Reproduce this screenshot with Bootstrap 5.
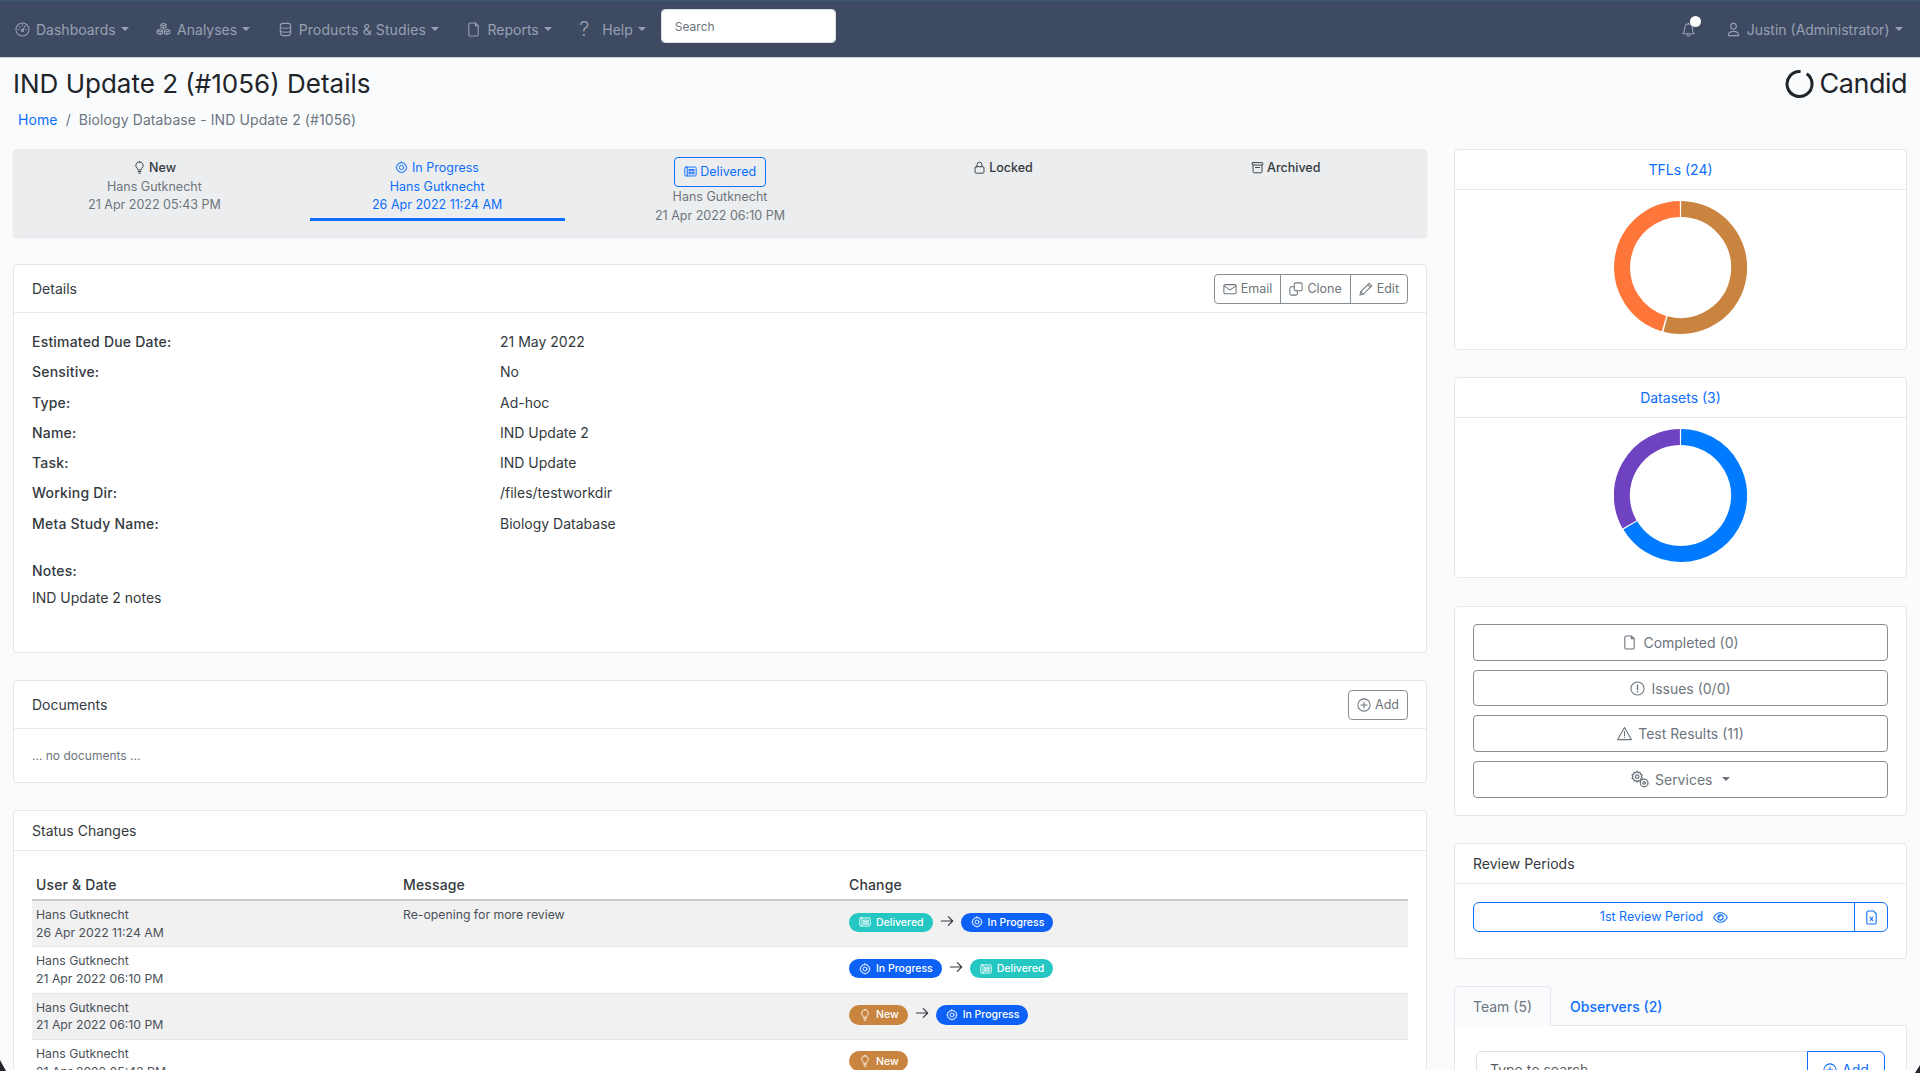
<!DOCTYPE html>
<html lang="en">
<head>
<meta charset="utf-8">
<title>IND Update 2 (#1056) Details</title>
<link href="https://cdn.jsdelivr.net/npm/bootstrap@5.3.0/dist/css/bootstrap.min.css" rel="stylesheet">
<style>
html,body{height:1080px;overflow:hidden;background:#fff}
body{font-family:Inter,"Liberation Sans",sans-serif;font-size:14px;color:#343a40;line-height:1.5}
.app-frame{height:1070px;overflow:hidden;background:#fafbfd;position:relative}
.ico{width:1em;height:1em;fill:none;stroke:currentColor;stroke-width:1.15;stroke-linecap:round;stroke-linejoin:round;flex:none;vertical-align:-.125em}
.topbar{background:#3e4a61;height:58px;padding:0 4px 0 1px;border-top:1px solid #3d5675;border-bottom:1px solid #c8ccd2;flex-wrap:nowrap}
.topbar .nav-link{color:#98a1b1;font-size:14px;padding:0 13.5px 0 14px;display:flex;align-items:center;gap:6px;white-space:nowrap}
.topbar .nav-link .ico{font-size:15px}
.topbar .dropdown-toggle::after{margin-left:-1px}
.topbar .nav-wide{letter-spacing:.11px}
.help-mark{font-size:20px;font-weight:300;line-height:1;width:11px;margin-right:6px}
.nav-search{width:175px;height:34px;font-size:12px;padding:0 13px;margin:-6px 0 0 1.500px;border-radius:4px}
.nav-search::placeholder{color:#6c757d;opacity:1}
.bell-wrap{position:relative;color:#98a1b1;font-size:15px;margin-right:16px;display:flex}
.bell-dot{position:absolute;right:-5px;top:-6px;width:11px;height:11px;border-radius:50%;background:#fff}
.page-body{padding:0 13px;display:flex;gap:27px;align-items:flex-start}
.main-col{flex:1;min-width:0}
.side-col{width:453px;flex:none}
.title-row{height:91px;padding-top:7px;margin:0 13px}
.page-title{font-size:26px;font-weight:400;color:#212529;margin:0;line-height:38px}
.crumbs{font-size:14px;letter-spacing:.1px;margin:6px 0 0 5px;--bs-breadcrumb-divider-color:#6c757d;--bs-breadcrumb-item-active-color:#6c757d}
.brand-mark{display:flex;align-items:center;gap:6px;font-size:27px;color:#212529;letter-spacing:-.5px;line-height:38px}
.stepper{background:#ecedef;border-radius:4px;height:88px;padding:8px 0 0;margin-bottom:27px;box-shadow:0 1px 1px #e4e5e8;font-size:12.5px;line-height:18.5px;color:#6c757d;text-align:center}
.step-cell{padding:2px 14px 0}
.step-cell b{font-weight:500;color:#343a40}
.step-on{color:#0d6efd;margin:0 14px;padding-bottom:3px;border-bottom:3px solid #0d6efd}
.step-on b{color:#0d6efd;font-weight:400}
.step-cell .ico{font-size:13px;vertical-align:-2px}
.step-btn{display:inline-block;border:1px solid #0d6efd;border-radius:4px;color:#0d6efd;height:30px;line-height:28px;padding:0 9px;margin:-2px 0 1px;font-size:12.5px}
.pane{border:1px solid #e6e7ea;border-radius:4px;--bs-card-cap-bg:#fff;margin-bottom:27px}
.pane-gap{margin-bottom:28px}
.pane .card-header{background:#fff;border-bottom:1px solid #e8e9ec;padding:0 18px;display:flex;align-items:center;justify-content:space-between;color:#343a40;font-size:14px}
.head-tall{height:48px}
.head-short{height:40px}
.tool-btn{font-size:12.5px;height:30px;padding:1px 8px 0;display:inline-flex;align-items:center;gap:4px;--bs-btn-border-color:#868e96;border-radius:4px}
.tool-btn .ico{font-size:14px}
.field-list{padding:14px 18px 0;height:339px}
.field-line{display:grid;grid-template-columns:468px 1fr;line-height:30.3px}
.field-line span:first-child,.note-head{font-weight:500;letter-spacing:.2px}
.note-head{margin-top:21px;line-height:21px}
.note-text{margin-top:6px;line-height:21px}
.empty-note{height:53px;padding:18px 18px 0;font-size:12px;color:#6c757d;line-height:18px}
.log-wrap{padding:17px 18px 0}
.log-table{font-size:12.25px;line-height:17.8px;margin:0;color:#495057;table-layout:fixed;--bs-table-striped-bg:#f1f1f2;--bs-table-striped-color:#495057;--bs-table-border-color:#e4e5e8}
.log-table th{font-size:14px;font-weight:500;letter-spacing:.15px;color:#343a40;padding:6px 4px 4px;border-bottom:2px solid #c9cbce;line-height:21px}
.log-table td{padding:5px 4px 4.700px}
.state-pill{font-size:10.5px;font-weight:500;height:19.5px;line-height:19px;padding:0 9px 0 10px;display:inline-flex;align-items:center;gap:5px;border-radius:10px;color:#fff;vertical-align:top}
.state-pill .ico{font-size:12px}
.pill-teal{background:#25c7c3}.pill-blue{background:#0d62f5}.pill-orange{background:#c9843f}
.change-cell{display:flex;align-items:center;gap:7px;padding-top:6.500px}
.change-cell>.ico{font-size:14px;color:#343a40;margin-top:-3px;stroke-width:1.3}
.side-col .pane .card-header{justify-content:center;height:39.500px}
.side-col .pane .card-header.to-left{justify-content:flex-start;height:40px}
.count-link{color:#0d6efd;text-decoration:none;font-size:14px}
.donut-box{height:159.500px;display:flex;justify-content:center;padding-top:11.500px}
.donut-svg{width:133px;height:133px}
.stack-box{padding:17px 18px;display:flex;flex-direction:column;gap:9px}
.wide-btn{height:36.7px;font-size:14px;--bs-btn-border-color:#868e96;display:flex;align-items:center;justify-content:center;gap:6px;border-radius:4px;padding:0}
.wide-btn .ico{font-size:15px}
.wide-btn .ico-big{font-size:18px}
.review-box{height:74px;padding:18px 18px 0}
.review-btn{height:30px;font-size:12.5px;padding:1px 0 0;display:flex;align-items:center;justify-content:center;gap:10px}
.review-btn .ico{font-size:15px}
.btn-group .review-end{flex:0 0 34px}
.tab-row{border-bottom:1px solid #e6e7ea;height:40px;--bs-nav-tabs-border-radius:4px;margin-top:1px}
.tab-row .nav-link{height:40px;padding:0 18px;line-height:39px;font-size:14px;font-weight:500;color:#0d6efd;border:1px solid transparent}
.tab-row .nav-link.active{background:#fafbfd;border-color:#e6e7ea #e6e7ea #fafbfd;color:#6c757d;padding:0 18px;font-weight:400}
.team-box{border:1px solid #e6e7ea;border-top:0;border-radius:0 0 4px 4px;background:#fff;padding:25px 21px;height:120px;position:relative}
.team-box input{height:38px;font-size:14px;border-color:#dee2e6;padding-left:13px}
.team-add{width:78px;flex:none;font-size:14px;display:flex;align-items:center;justify-content:center;gap:5px;padding:0}
.corner-l,.corner-r{position:fixed;fill:#24262a}
.corner-l{left:0;top:1060px;width:6px;height:11px}
.corner-r{left:1915px;top:1065px;width:5px;height:8px}
</style>
</head>
<body>
<svg width="0" height="0" class="position-absolute">
<defs>
<symbol id="i-gauge" viewBox="0 0 16 16"><circle cx="8" cy="8" r="7"/><path d="M8 8.800 11 4.200M3.500 8h1M11.500 8h1M5 5l.7.7M8 3v1"/><circle cx="8" cy="9" r="1.100"/></symbol>
<symbol id="i-boxes" viewBox="0 0 16 16"><path d="M8 1.200 10.800 2.600V5.600L8 7 5.200 5.600V2.600ZM5.200 2.600 8 4l2.800-1.400M8 4v3"/><path d="M4.400 7.600 7.200 9V12L4.400 13.400 1.200 12V9ZM1.200 9l3.200 1.400L7.200 9M4.400 10.400v3"/><path d="M11.600 7.600 14.800 9V12L11.600 13.400 8.800 12V9ZM8.800 9l2.800 1.400L14.800 9M11.600 10.400v3"/></symbol>
<symbol id="i-db" viewBox="0 0 16 16"><rect x="2.500" y="1.500" width="11" height="13" rx="3"/><path d="M2.500 6c1.500 1 9.500 1 11 0M2.500 10.200c1.500 1 9.500 1 11 0"/></symbol>
<symbol id="i-file" viewBox="0 0 16 16"><path d="M3 2.500A1.500 1.500 0 0 1 4.500 1H10l3 3v9.500a1.500 1.500 0 0 1-1.500 1.500h-7A1.500 1.500 0 0 1 3 13.500ZM10 1v3h3"/></symbol>
<symbol id="i-bell" viewBox="0 0 16 16"><path d="M8 2a4 4 0 0 0-4 4c0 4-1.500 5.500-2 6.500h12C13.500 11.500 12 10 12 6a4 4 0 0 0-4-4ZM8 1v1M6.500 13.500a1.500 1.500 0 0 0 3 0"/></symbol>
<symbol id="i-user" viewBox="0 0 16 16"><circle cx="8" cy="4.500" r="3"/><path d="M2.500 14.500c0-3.500 2.500-4.500 5.500-4.500s5.500 1 5.500 4.500Z"/></symbol>
<symbol id="i-bulb" viewBox="0 0 16 16"><path d="M8 1a4.500 4.500 0 0 0-2.800 8c.5.500.8 1.200.8 2h4c0-.8.300-1.500.8-2A4.500 4.500 0 0 0 8 1ZM6.300 13h3.400M7 15h2"/></symbol>
<symbol id="i-gear" viewBox="0 0 16 16"><path d="M8 1l1.200 1.700 2-.4.6 2 2 .6-.4 2L15 8l-1.600 1.100.4 2-2 .6-.6 2-2-.4L8 15l-1.200-1.700-2 .4-.6-2-2-.6.4-2L1 8l1.600-1.100-.4-2 2-.6.6-2 2 .4Z"/><circle cx="8" cy="8" r="2.600"/></symbol>
<symbol id="i-news" viewBox="0 0 16 16"><rect x="1" y="2.500" width="14" height="11" rx="1.500"/><path d="M4 2.500v11M6.500 5.500h6v1.700h-6ZM6.500 9h2v2h-2ZM10.500 9h2v2h-2Z"/></symbol>
<symbol id="i-lock" viewBox="0 0 16 16"><rect x="2.500" y="7" width="11" height="8" rx="1.500"/><path d="M5 7V4.500a3 3 0 0 1 6 0V7"/></symbol>
<symbol id="i-archive" viewBox="0 0 16 16"><rect x="1.500" y="2" width="13" height="3" rx=".8"/><path d="M2.500 5v8a1.500 1.500 0 0 0 1.500 1.500h8a1.500 1.500 0 0 0 1.500-1.500V5M5.500 8h5"/></symbol>
<symbol id="i-mail" viewBox="0 0 16 16"><rect x="1" y="3" width="14" height="10.500" rx="1.500"/><path d="M1 4.500 8 9l7-4.500"/></symbol>
<symbol id="i-copy" viewBox="0 0 16 16"><rect x="6" y="1" width="9" height="9" rx="1.500"/><path d="M6 5.500H2.500A1.500 1.500 0 0 0 1 7v6.500A1.500 1.500 0 0 0 2.500 15H8a1.500 1.500 0 0 0 1.500-1.500V10"/></symbol>
<symbol id="i-pen" viewBox="0 0 16 16"><path d="M11.500 1.500 14.500 4.500 5 14 1 15 2 11ZM10 3l3 3M2 11l3 3"/></symbol>
<symbol id="i-plus" viewBox="0 0 16 16"><circle cx="8" cy="8" r="7"/><path d="M8 4.500v7M4.500 8h7"/></symbol>
<symbol id="i-alert" viewBox="0 0 16 16"><circle cx="8" cy="8" r="7"/><path d="M8 4.200v5M8 11.400v.4" stroke-width="1.500"/></symbol>
<symbol id="i-warn" viewBox="0 0 16 16"><path d="M8 1.500 15.300 14.500H.7ZM8 6v4.200M8 12v.3"/></symbol>
<symbol id="i-gears" viewBox="0 0 16 16"><path d="M5.500 1 6.500 2.300l1.600-.2.300 1.600 1.500.7-.7 1.500.7 1.500-1.500.7-.3 1.600-1.600-.2-1 1.300-1-1.300-1.600.2-.3-1.600L1 7.400l.7-1.500L1 4.400l1.500-.7.300-1.600 1.600.2Z"/><circle cx="5.500" cy="5.900" r="1.500"/><circle cx="11.700" cy="11.500" r="3.400"/><circle cx="11.700" cy="11.500" r="1.100"/></symbol>
<symbol id="i-eye" viewBox="0 0 16 16"><path d="M.8 8S3.500 3 8 3s7.200 5 7.200 5-2.700 5-7.200 5S.8 8 .8 8Z"/><circle cx="8" cy="8" r="2.800"/><path d="M8 6.400A1.600 1.600 0 0 0 6.400 8"/></symbol>
<symbol id="i-filex" viewBox="0 0 16 16"><path d="M3 2.500A1.500 1.500 0 0 1 4.500 1H10l3 3v9.500a1.500 1.500 0 0 1-1.500 1.500h-7A1.500 1.500 0 0 1 3 13.500ZM6.500 7.500l3 4M9.500 7.500l-3 4"/></symbol>
<symbol id="i-arrow" viewBox="0 0 16 16"><path d="M1.500 8h13M9.500 3l5 5-5 5"/></symbol>
</defs>
</svg>

<div class="app-frame">
<nav class="navbar topbar d-flex align-items-center justify-content-between">
  <div class="d-flex align-items-center">
    <a class="nav-link dropdown-toggle" href="#"><svg class="ico"><use href="#i-gauge"/></svg>Dashboards</a>
    <a class="nav-link dropdown-toggle" href="#"><svg class="ico"><use href="#i-boxes"/></svg>Analyses</a>
    <a class="nav-link dropdown-toggle nav-wide" href="#"><svg class="ico"><use href="#i-db"/></svg>Products &amp; Studies</a>
    <a class="nav-link dropdown-toggle" href="#"><svg class="ico"><use href="#i-file"/></svg>Reports</a>
    <a class="nav-link dropdown-toggle" href="#"><span class="help-mark">?</span>Help</a>
    <input class="form-control nav-search" type="text" placeholder="Search">
  </div>
  <div class="d-flex align-items-center">
    <span class="bell-wrap"><svg class="ico"><use href="#i-bell"/></svg><span class="bell-dot"></span></span>
    <a class="nav-link dropdown-toggle" href="#"><svg class="ico"><use href="#i-user"/></svg>Justin (Administrator)</a>
  </div>
</nav>

<div class="title-row d-flex justify-content-between align-items-start">
  <div>
    <h1 class="page-title">IND Update 2 (#1056) Details</h1>
    <ol class="breadcrumb crumbs">
      <li class="breadcrumb-item"><a href="#" class="text-decoration-none">Home</a></li>
      <li class="breadcrumb-item active">Biology Database - IND Update 2 (#1056)</li>
    </ol>
  </div>
  <div class="brand-mark">
    <svg width="29" height="30" viewBox="0 0 29 30"><path d="M21.700 4.760A12.500 12.500 0 1 1 15.600 2.550" fill="none" stroke="#212529" stroke-width="3"/></svg>Candid
  </div>
</div>

<div class="page-body">
  <div class="main-col">
    <div class="stepper row g-0">
      <div class="col"><div class="step-cell"><b><svg class="ico"><use href="#i-bulb"/></svg> New</b><br>Hans Gutknecht<br>21 Apr 2022 05:43 PM</div></div>
      <div class="col"><div class="step-cell step-on"><b><svg class="ico"><use href="#i-gear"/></svg> In Progress</b><br>Hans Gutknecht<br>26 Apr 2022 11:24 AM</div></div>
      <div class="col"><div class="step-cell"><span class="step-btn"><svg class="ico"><use href="#i-news"/></svg> Delivered</span><br>Hans Gutknecht<br>21 Apr 2022 06:10 PM</div></div>
      <div class="col"><div class="step-cell"><b><svg class="ico"><use href="#i-lock"/></svg> Locked</b></div></div>
      <div class="col"><div class="step-cell"><b><svg class="ico"><use href="#i-archive"/></svg> Archived</b></div></div>
    </div>

    <div class="card pane">
      <div class="card-header head-tall">
        <span>Details</span>
        <div class="btn-group">
          <button class="btn btn-outline-secondary tool-btn"><svg class="ico"><use href="#i-mail"/></svg>Email</button>
          <button class="btn btn-outline-secondary tool-btn"><svg class="ico"><use href="#i-copy"/></svg>Clone</button>
          <button class="btn btn-outline-secondary tool-btn"><svg class="ico"><use href="#i-pen"/></svg>Edit</button>
        </div>
      </div>
      <div class="field-list">
        <div class="field-line"><span>Estimated Due Date:</span><span>21 May 2022</span></div>
        <div class="field-line"><span>Sensitive:</span><span>No</span></div>
        <div class="field-line"><span>Type:</span><span>Ad-hoc</span></div>
        <div class="field-line"><span>Name:</span><span>IND Update 2</span></div>
        <div class="field-line"><span>Task:</span><span>IND Update</span></div>
        <div class="field-line"><span>Working Dir:</span><span>/files/testworkdir</span></div>
        <div class="field-line"><span>Meta Study Name:</span><span>Biology Database</span></div>
        <div class="note-head">Notes:</div>
        <div class="note-text">IND Update 2 notes</div>
      </div>
    </div>

    <div class="card pane">
      <div class="card-header head-tall">
        <span>Documents</span>
        <button class="btn btn-outline-secondary tool-btn"><svg class="ico"><use href="#i-plus"/></svg>Add</button>
      </div>
      <div class="empty-note">... no documents ...</div>
    </div>

    <div class="card pane">
      <div class="card-header head-short"><span>Status Changes</span></div>
      <div class="log-wrap">
        <table class="table table-striped log-table">
          <colgroup><col style="width:367px"><col style="width:446px"><col></colgroup>
          <thead><tr><th>User &amp; Date</th><th>Message</th><th>Change</th></tr></thead>
          <tbody>
            <tr><td>Hans Gutknecht<br>26 Apr 2022 11:24 AM</td><td>Re-opening for more review</td><td><div class="change-cell"><span class="state-pill pill-teal"><svg class="ico"><use href="#i-news"/></svg>Delivered</span><svg class="ico"><use href="#i-arrow"/></svg><span class="state-pill pill-blue"><svg class="ico"><use href="#i-gear"/></svg>In Progress</span></div></td></tr>
            <tr><td>Hans Gutknecht<br>21 Apr 2022 06:10 PM</td><td></td><td><div class="change-cell"><span class="state-pill pill-blue"><svg class="ico"><use href="#i-gear"/></svg>In Progress</span><svg class="ico"><use href="#i-arrow"/></svg><span class="state-pill pill-teal"><svg class="ico"><use href="#i-news"/></svg>Delivered</span></div></td></tr>
            <tr><td>Hans Gutknecht<br>21 Apr 2022 06:10 PM</td><td></td><td><div class="change-cell"><span class="state-pill pill-orange"><svg class="ico"><use href="#i-bulb"/></svg>New</span><svg class="ico"><use href="#i-arrow"/></svg><span class="state-pill pill-blue"><svg class="ico"><use href="#i-gear"/></svg>In Progress</span></div></td></tr>
            <tr><td>Hans Gutknecht<br>21 Apr 2022 05:43 PM</td><td></td><td><div class="change-cell"><span class="state-pill pill-orange"><svg class="ico"><use href="#i-bulb"/></svg>New</span></div></td></tr>
          </tbody>
        </table>
      </div>
    </div>
  </div>

  <div class="side-col">
    <div class="card pane">
      <div class="card-header"><a href="#" class="count-link">TFLs (24)</a></div>
      <div class="donut-box">
        <svg class="donut-svg" viewBox="0 0 133 133" fill="none" stroke-width="16">
          <path d="M67.100 8A58.500 58.500 0 1 1 51.500 123" stroke="#c9843f"/>
          <path d="M50 122.600A58.500 58.500 0 0 1 65.900 8" stroke="#ff763b"/>
        </svg>
      </div>
    </div>
    <div class="card pane pane-gap">
      <div class="card-header"><a href="#" class="count-link">Datasets (3)</a></div>
      <div class="donut-box">
        <svg class="donut-svg" viewBox="0 0 133 133" fill="none" stroke-width="16">
          <path d="M67.100 8A58.500 58.500 0 1 1 16.300 96.300" stroke="#007bff"/>
          <path d="M15.500 95.500A58.500 58.500 0 0 1 65.900 8" stroke="#6f42c1"/>
        </svg>
      </div>
    </div>
    <div class="card pane">
      <div class="stack-box">
        <button class="btn btn-outline-secondary wide-btn"><svg class="ico"><use href="#i-file"/></svg>Completed (0)</button>
        <button class="btn btn-outline-secondary wide-btn"><svg class="ico"><use href="#i-alert"/></svg>Issues (0/0)</button>
        <button class="btn btn-outline-secondary wide-btn"><svg class="ico"><use href="#i-warn"/></svg>Test Results (11)</button>
        <button class="btn btn-outline-secondary wide-btn dropdown-toggle"><svg class="ico ico-big"><use href="#i-gears"/></svg>Services</button>
      </div>
    </div>
    <div class="card pane">
      <div class="card-header to-left"><span>Review Periods</span></div>
      <div class="review-box">
        <div class="btn-group w-100">
          <button class="btn btn-outline-primary review-btn">1st Review Period <svg class="ico"><use href="#i-eye"/></svg></button>
          <button class="btn btn-outline-primary review-btn review-end"><svg class="ico"><use href="#i-filex"/></svg></button>
        </div>
      </div>
    </div>
    <ul class="nav nav-tabs tab-row">
      <li class="nav-item"><a class="nav-link active" href="#">Team (5)</a></li>
      <li class="nav-item"><a class="nav-link" href="#">Observers (2)</a></li>
    </ul>
    <div class="team-box">
      <div class="input-group">
        <input class="form-control" type="text" placeholder="Type to search">
        <button class="btn btn-outline-primary team-add"><svg class="ico"><use href="#i-plus"/></svg>Add</button>
      </div>
    </div>
  </div>
</div>
</div>
<svg class="corner-l" viewBox="0 0 6 11"><path d="M0 0 6 11H0Z"/></svg>
<svg class="corner-r" viewBox="0 0 5 8"><path d="M5 0V8H0Z"/></svg>
</body>
</html>
